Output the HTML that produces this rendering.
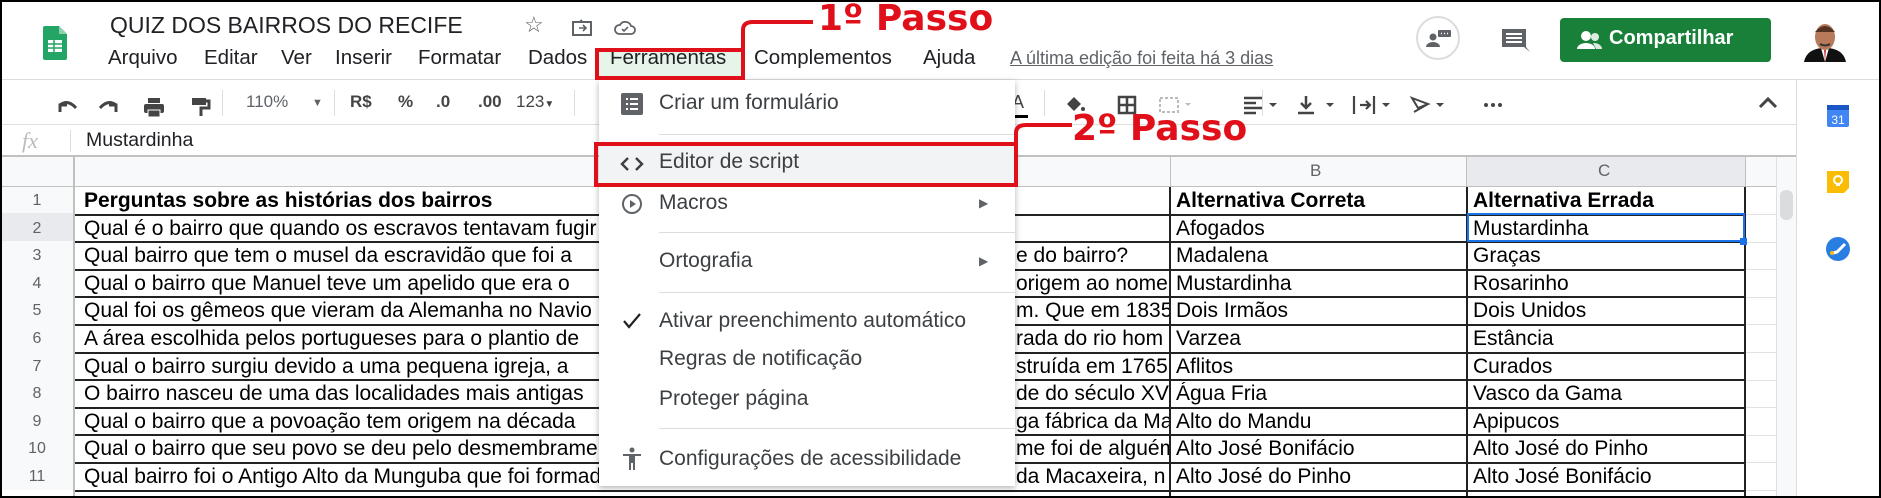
<!DOCTYPE html>
<html><head><meta charset="utf-8"><style>
*{margin:0;padding:0;box-sizing:border-box}
body{width:1881px;height:498px;overflow:hidden;background:#fff;font-family:"Liberation Sans",Arial,sans-serif;color:#202124;position:relative}
.a{position:absolute;white-space:nowrap}
.menu{font-size:20.5px;color:#202124;top:46px}
.tb{position:absolute;top:92px;font-size:17px;color:#5f6368}
.sep{position:absolute;width:1px;background:#dadce0}
.rn{position:absolute;left:0;width:74px;text-align:center;font-size:16px;color:#5f6368}
.cell{position:absolute;font-size:21px;overflow:hidden;white-space:nowrap;color:#000}
.hl{position:absolute;height:2px;background:#222}
.mi{position:absolute;left:659px;font-size:21px;color:#3c4043;white-space:nowrap}
.ms{position:absolute;left:659px;width:356px;height:1px;background:#dadce0}
.red{color:#e0101a;font-weight:bold;font-size:36px;font-family:"DejaVu Sans","Liberation Sans",sans-serif;position:absolute;white-space:nowrap}
</style></head><body>
<svg class="a" style="left:43px;top:26px" width="24" height="34" viewBox="0 0 24 34"><path d="M2 0h14l8 8v24a2 2 0 0 1-2 2H2a2 2 0 0 1-2-2V2a2 2 0 0 1 2-2z" fill="#23a566"/><path d="M16 0v8h8z" fill="#8ed1b1"/><rect x="5" y="14" width="14" height="12" fill="#fff"/><path d="M5 18h14M5 22h14M11 14v12" stroke="#23a566" stroke-width="1.5"/></svg>
<div class="a" style="left:110px;top:12px;font-size:23px;color:#202124">QUIZ DOS BAIRROS DO RECIFE</div>
<div class="a" style="left:524px;top:12px;font-size:22px;color:#5f6368">☆</div>
<svg class="a" style="left:572px;top:19px" width="20" height="17"><rect x="1" y="3" width="18" height="13" fill="none" stroke="#5f6368" stroke-width="2"/><path d="M1 3h7l2-2" stroke="#5f6368" stroke-width="2" fill="none"/><path d="M7 9h6M11 6l3 3-3 3" stroke="#5f6368" stroke-width="1.6" fill="none"/></svg>
<svg class="a" style="left:614px;top:19px" width="22" height="17"><path d="M5 15h12a4 4 0 0 0 0-8 6 6 0 0 0-11-1 4.5 4.5 0 0 0-1 9z" fill="none" stroke="#5f6368" stroke-width="1.8"/><path d="M8 10l2 2 4-4" stroke="#5f6368" stroke-width="1.6" fill="none"/></svg>
<div class="a menu" style="left:108px">Arquivo</div>
<div class="a menu" style="left:204px">Editar</div>
<div class="a menu" style="left:281px">Ver</div>
<div class="a menu" style="left:335px">Inserir</div>
<div class="a menu" style="left:418px">Formatar</div>
<div class="a menu" style="left:528px">Dados</div>
<div class="a" style="left:598px;top:51px;width:145px;height:27px;background:#e6f4ea"></div>
<div class="a menu" style="left:610px">Ferramentas</div>
<div class="a menu" style="left:754px">Complementos</div>
<div class="a menu" style="left:923px">Ajuda</div>
<div class="a menu" style="left:1010px;color:#5f6368;text-decoration:underline;font-size:18px;top:48px">A última edição foi feita há 3 dias</div>
<div class="a" style="left:1416px;top:16px;width:44px;height:44px;border:2px solid #dadce0;border-radius:50%"></div>
<svg class="a" style="left:1426px;top:29px" width="26" height="20"><circle cx="7" cy="8" r="3.5" fill="#5f6368"/><path d="M0 18a7 5 0 0 1 14 0z" fill="#5f6368"/><rect x="12" y="1" width="13" height="7" rx="1" fill="#5f6368"/><path d="M15 4.5h1M18 4.5h1M21 4.5h1" stroke="#fff" stroke-width="1.5"/></svg>
<svg class="a" style="left:1500px;top:27px" width="30" height="26"><path d="M2 2h24v18h-0l4 5-6-5H2z" fill="#5f6368"/><path d="M6 7h16M6 11h16M6 15h16" stroke="#fff" stroke-width="2"/></svg>
<div class="a" style="left:1560px;top:18px;width:211px;height:44px;background:#188038;border-radius:4px"></div>
<svg class="a" style="left:1577px;top:30px" width="26" height="20"><circle cx="9" cy="6" r="5" fill="#fff"/><path d="M0 19a9 6 0 0 1 18 0z" fill="#fff"/><circle cx="18" cy="7" r="4" fill="#fff" opacity=".85"/><path d="M16 13a8 6 0 0 1 9 6h-6" fill="#fff" opacity=".85"/></svg>
<div class="a" style="left:1609px;top:27px;font-size:20px;color:#fff;font-weight:bold">Compartilhar</div>
<svg class="a" style="left:1804px;top:20px" width="42" height="42"><path d="M0 42c2-10 10-14 21-14s19 4 21 14z" fill="#111"/><path d="M17 28l4 14 4-14z" fill="#fff"/><path d="M20 30h2l-1 12z" fill="#c33"/><ellipse cx="21" cy="17" rx="10" ry="13" fill="#b87a5a"/><path d="M11 12q10-12 20 0" fill="#553322"/><path d="M16 24q5 3 10 0" stroke="#333" stroke-width="2" fill="none"/></svg>
<div class="a" style="left:0;top:79px;width:1881px;height:1px;background:#dadce0"></div>
<svg class="a" style="left:56px;top:96px" width="160" height="22"><path d="M4 16l0-7 7 0M4 9q8-6 16 3" stroke="#444" stroke-width="3" fill="none"/><path d="M60 16l0-7-7 0M60 9q-8-6-16 3" stroke="#444" stroke-width="3" fill="none"/><rect x="88" y="8" width="20" height="9" rx="2" fill="#444"/><rect x="92" y="2" width="12" height="5" fill="#444"/><rect x="92" y="14" width="12" height="7" fill="#444" stroke="#fff" stroke-width="1"/><rect x="136" y="2" width="14" height="7" fill="#444"/><path d="M150 5h3v7h-8v8" stroke="#444" stroke-width="3" fill="none"/></svg>
<div class="sep" style="left:222px;top:90px;height:26px"></div>
<div class="tb" style="left:246px">110%</div><div class="tb" style="left:312px;font-size:11px;top:97px">▼</div>
<div class="sep" style="left:334px;top:90px;height:26px"></div>
<div class="tb" style="left:350px;font-weight:bold;color:#444">R$</div>
<div class="tb" style="left:398px;font-weight:bold;color:#444">%</div>
<div class="tb" style="left:436px;font-weight:bold;color:#444">.0</div>
<div class="tb" style="left:478px;font-weight:bold;color:#444">.00</div>
<div class="tb" style="left:516px;color:#444">123<span style="font-size:10px">▼</span></div>
<div class="sep" style="left:574px;top:90px;height:26px"></div>
<div class="tb" style="left:1012px;color:#444;font-size:18px">A</div>
<div class="a" style="left:1012px;top:115px;width:16px;height:3px;background:#000"></div>
<div class="sep" style="left:1044px;top:90px;height:26px"></div>
<svg class="a" style="left:1064px;top:94px" width="440" height="22"><path d="M3 10l7-7 7 7-7 7z" fill="#444"/><circle cx="19" cy="15" r="2" fill="#444"/><rect x="55" y="3" width="16" height="16" fill="none" stroke="#444" stroke-width="2.5"/><path d="M55 11h16M63 3v16" stroke="#444" stroke-width="2.5"/><rect x="96" y="4" width="18" height="14" fill="none" stroke="#bbb" stroke-width="2" stroke-dasharray="3 2"/><path d="M121 9l3 3 3-3" fill="#bbb"/><path d="M180 4h18M180 9h12M180 14h18M180 19h12" stroke="#444" stroke-width="2.5"/><path d="M205 9l4 4 4-4z" fill="#444"/><path d="M242 2v12M237 9l5 5 5-5M234 19h16" stroke="#444" stroke-width="2.5" fill="none"/><path d="M262 9l4 4 4-4z" fill="#444"/><path d="M290 2v18M296 11h10M302 7l4 4-4 4M310 2v18" stroke="#444" stroke-width="2.2" fill="none"/><path d="M318 9l4 4 4-4z" fill="#444"/><path d="M348 4l16 6-10 4zM350 18l14-8" stroke="#444" stroke-width="2" fill="none"/><path d="M372 9l4 4 4-4z" fill="#444"/></svg>
<div class="sep" style="left:1262px;top:90px;height:26px"></div>
<svg class="a" style="left:1484px;top:98px" width="40" height="14"><circle cx="2" cy="7" r="2" fill="#444"/><circle cx="9" cy="7" r="2" fill="#444"/><circle cx="16" cy="7" r="2" fill="#444"/></svg>
<svg class="a" style="left:1758px;top:96px" width="20" height="14"><path d="M2 11l8-8 8 8" stroke="#444" stroke-width="3" fill="none"/></svg>
<div class="a" style="left:0;top:124px;width:1796px;height:1px;background:#e0e0e0"></div>
<div class="a" style="left:22px;top:128px;font-size:22px;font-style:italic;color:#bbb;font-family:'Liberation Serif',serif">fx</div>
<div class="a" style="left:70px;top:130px;width:1px;height:22px;background:#dadce0"></div>
<div class="a" style="left:86px;top:129px;font-size:19.5px">Mustardinha</div>
<div class="a" style="left:0;top:155px;width:1796px;height:2px;background:#c0c0c0"></div>
<div class="a" style="left:0;top:157px;width:1776px;height:30px;background:#f8f9fa"></div>
<div class="a" style="left:1467px;top:157px;width:278px;height:30px;background:#e8eaed"></div>
<div class="a" style="left:0;top:157px;width:74px;height:333px;background:#f8f9fa"></div>
<div class="a" style="left:0;top:213px;width:74px;height:28px;background:#e8eaed"></div>
<div class="a" style="left:1310px;top:161px;font-size:17px;color:#5f6368">B</div>
<div class="a" style="left:1598px;top:161px;font-size:17px;color:#5f6368">C</div>
<div class="a" style="left:73px;top:157px;width:2px;height:341px;background:#c0c0c0"></div>
<div class="a" style="left:0;top:186px;width:1776px;height:1px;background:#c0c0c0"></div>
<div class="a" style="left:1170px;top:157px;width:1px;height:30px;background:#c0c0c0"></div>
<div class="a" style="left:1466px;top:157px;width:1px;height:30px;background:#c0c0c0"></div>
<div class="a" style="left:1745px;top:157px;width:1px;height:30px;background:#c0c0c0"></div>
<div id="grid"></div>
<div class="a" style="left:1169px;top:187px;width:2px;height:311px;background:#222"></div>
<div class="a" style="left:1466px;top:187px;width:2px;height:311px;background:#222"></div>
<div class="a" style="left:1744px;top:187px;width:2px;height:311px;background:#222"></div>
<div class="a" style="left:1467px;top:213px;width:278px;height:29px;border:2px solid #1a73e8"></div>
<div class="a" style="left:1740px;top:238px;width:7px;height:7px;background:#1a73e8"></div>
<div class="a" style="left:1776px;top:157px;width:20px;height:341px;background:#f8f9fa;border-left:1px solid #e0e0e0"></div>
<div class="a" style="left:1780px;top:190px;width:13px;height:30px;background:#dadce0;border-radius:6px"></div>
<div class="a" style="left:1796px;top:79px;width:1px;height:419px;background:#dadce0"></div>
<svg class="a" style="left:1826px;top:104px" width="24" height="24"><rect x="1" y="1" width="22" height="22" rx="2" fill="#4285f4"/><rect x="1" y="1" width="22" height="5" fill="#1a56c4"/><text x="12" y="20" font-size="12" text-anchor="middle" fill="#fff" font-family="Liberation Sans">31</text></svg>
<svg class="a" style="left:1826px;top:170px" width="24" height="24"><path d="M1 1h22v17l-5 5H1z" fill="#fbbc04"/><circle cx="12" cy="10" r="4" fill="none" stroke="#fff" stroke-width="2"/><path d="M10 15h4" stroke="#fff" stroke-width="2"/></svg>
<svg class="a" style="left:1825px;top:236px" width="26" height="26"><circle cx="13" cy="13" r="12" fill="#2a7de1"/><path d="M8 17l4-1 8-8" stroke="#fff" stroke-width="3" fill="none"/><circle cx="7" cy="17" r="2" fill="#fbbc04"/></svg>
<div class="a" style="left:599px;top:80px;width:416px;height:406px;background:#fff;box-shadow:0 2px 6px rgba(0,0,0,.3)"></div>
<svg class="a" style="left:621px;top:93px" width="22" height="22"><rect width="22" height="22" rx="2" fill="#5f6368"/><path d="M5 6h2M5 11h2M5 16h2M9 6h8M9 11h8M9 16h8" stroke="#fff" stroke-width="2"/></svg>
<div class="mi" style="top:91px">Criar um formulário</div>
<div class="ms" style="top:134px"></div>
<div class="a" style="left:599px;top:144px;width:416px;height:40px;background:#f1f3f4"></div>
<svg class="a" style="left:620px;top:156px" width="24" height="16"><path d="M8 2l-6 6 6 6M16 2l6 6-6 6" stroke="#3c4043" stroke-width="2.4" fill="none"/></svg>
<div class="mi" style="top:150px">Editor de script</div>
<svg class="a" style="left:621px;top:193px" width="22" height="22"><circle cx="11" cy="11" r="9" fill="none" stroke="#5f6368" stroke-width="2"/><path d="M9 7v8l6-4z" fill="#5f6368"/></svg>
<div class="mi" style="top:191px">Macros</div>
<div class="a" style="left:979px;top:196px;font-size:12px;color:#5f6368">▶</div>
<div class="ms" style="top:232px"></div>
<div class="mi" style="top:249px">Ortografia</div>
<div class="a" style="left:979px;top:254px;font-size:12px;color:#5f6368">▶</div>
<div class="ms" style="top:292px"></div>
<svg class="a" style="left:622px;top:312px" width="20" height="18"><path d="M2 9l5 6L18 2" stroke="#202124" stroke-width="2.2" fill="none"/></svg>
<div class="mi" style="top:309px">Ativar preenchimento automático</div>
<div class="mi" style="top:347px">Regras de notificação</div>
<div class="mi" style="top:387px">Proteger página</div>
<div class="ms" style="top:428px"></div>
<svg class="a" style="left:622px;top:447px" width="20" height="24"><circle cx="10" cy="3" r="2.5" fill="#5f6368"/><path d="M1 7h18v2h-6v14h-2v-7h-2v7H7V9H1z" fill="#5f6368"/></svg>
<div class="mi" style="top:447px">Configurações de acessibilidade</div>
<div class="a" style="left:595px;top:48px;width:150px;height:32px;border:4px solid #e0101a"></div>
<div class="a" style="left:594px;top:142px;width:424px;height:45px;border:4px solid #e0101a"></div>
<svg class="a" style="left:700px;top:0" width="420" height="160"><path d="M43 48V30q0-8 10-8h60" stroke="#e0101a" stroke-width="4" fill="none"/><path d="M316 142V133q0-8 10-8h46" stroke="#e0101a" stroke-width="4" fill="none"/></svg>
<div class="red" style="left:818px;top:-2px">1º Passo</div>
<div class="red" style="left:1072px;top:108px">2º Passo</div>
<div class="a" style="left:0;top:0;width:1881px;height:498px;border:2px solid #000"></div>
<script>
var A=["Perguntas sobre as histórias dos bairros","Qual é o bairro que quando os escravos tentavam fugir","Qual bairro que tem o musel da escravidão que foi a","Qual o bairro que Manuel teve um apelido que era o","Qual foi os gêmeos que vieram da Alemanha no Navio","A área escolhida pelos portugueses para o plantio de","Qual o bairro surgiu devido a uma pequena igreja, a","O bairro nasceu de uma das localidades mais antigas","Qual o bairro que a povoação tem origem na década","Qual o bairro que seu povo se deu pelo desmembramento","Qual bairro foi o Antigo Alto da Munguba que foi formado"];
var T=["","","e do bairro?","origem ao nome","m. Que em 1835","rada do rio hom","struída em 1765","de do século XVI","ga fábrica da Ma","me foi de alguém","da Macaxeira, n"];
var B=["Alternativa Correta","Afogados","Madalena","Mustardinha","Dois Irmãos","Varzea","Aflitos","Água Fria","Alto do Mandu","Alto José Bonifácio","Alto José do Pinho"];
var C=["Alternativa Errada","Mustardinha","Graças","Rosarinho","Dois Unidos","Estância","Curados","Vasco da Gama","Apipucos","Alto José do Pinho","Alto José Bonifácio"];
var h="";
for(var i=0;i<11;i++){var y=187+i*27.6;var fw=i==0?"font-weight:bold;":"";
h+='<div class="rn" style="top:'+(y+5)+'px">'+(i+1)+'</div>';
h+='<div class="cell" style="left:84px;top:'+(y+2)+'px;width:520px;'+fw+'">'+A[i]+'</div>';
if(T[i])h+='<div class="cell" style="left:1016px;top:'+(y+2)+'px;width:153px;">'+T[i]+'</div>';
h+='<div class="cell" style="left:1176px;top:'+(y+2)+'px;width:288px;'+fw+'">'+B[i]+'</div>';
h+='<div class="cell" style="left:1473px;top:'+(y+2)+'px;width:270px;'+fw+'">'+C[i]+'</div>';
h+='<div class="hl" style="left:75px;width:1671px;top:'+(y+26.6)+'px"></div>';
h+='<div class="a" style="left:1746px;width:30px;height:1px;background:#e2e2e2;top:'+(y+27)+'px"></div>';}
document.getElementById("grid").innerHTML=h;
</script>
</body></html>
